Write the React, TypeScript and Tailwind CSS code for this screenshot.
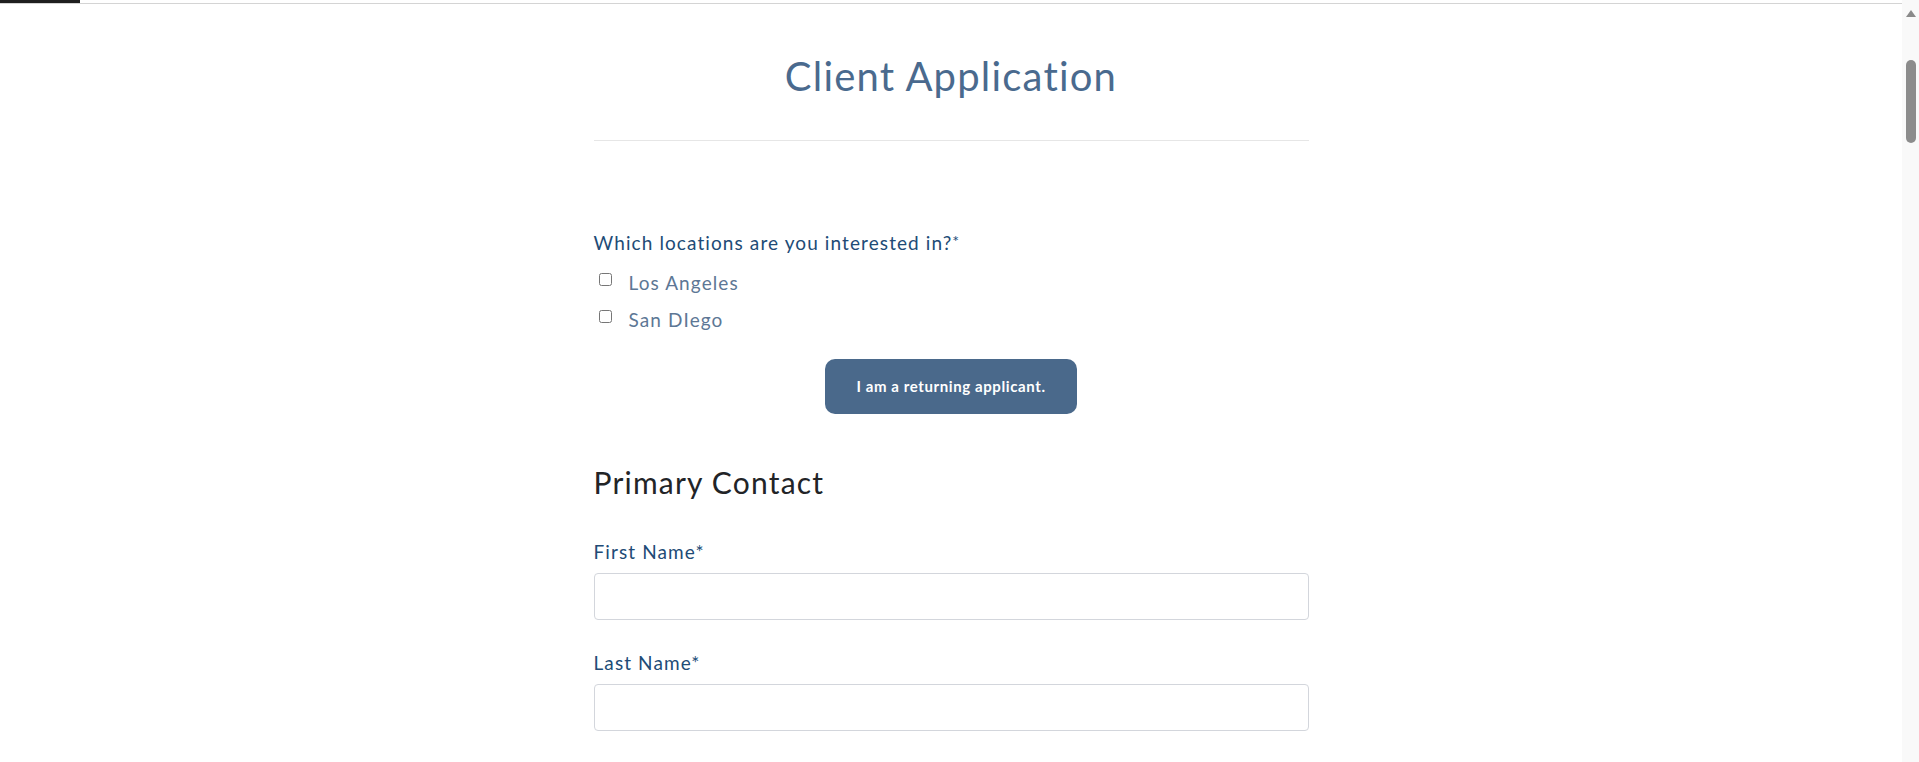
import React from 'react';

const locations = ['Los Angeles', 'San DIego'];

function Field({ label }: { label: string }) {
  return (
    <div className="flex flex-col">
      <label className="text-[19px] leading-[24px] tracking-[1.1px] text-[#214b76]">{label}</label>
      <input
        type="text"
        className="mt-[9px] h-[47px] w-full rounded-[4px] border border-[#d3d6dc] bg-white px-3 outline-none"
      />
    </div>
  );
}

export default function App() {
  return (
    <div className="flex h-[762px] overflow-hidden bg-white font-['Lato',sans-serif]">
      <div className="flex flex-1 flex-col">
        {/* browser chrome strip */}
        <div className="flex h-[3px]">
          <div className="w-[80px] bg-[#1f1f1f]" />
        </div>
        <div className="h-px bg-[#d4d4d4]" />

        <main className="mx-auto w-[715px]">
          <header className="mt-[52px] border-b border-[#e6e6e6] pb-[44px] text-center">
            <h1 className="text-[40px] leading-[40px] tracking-[1.2px] text-[#4a6a8e]">Client Application</h1>
          </header>

          <section className="mt-[90px]">
            <p className="text-[19px] leading-[24px] tracking-[1.1px] text-[#214b76]">
              Which locations are you interested in?<span className="align-top text-[16px] leading-[20px]">*</span>
            </p>
            <div className="mt-[9px] flex flex-col">
              {locations.map((loc) => (
                <label key={loc} className="flex h-[37px] items-center">
                  <input type="checkbox" className="m-0 mb-[6px] ml-[5px] h-[13px] w-[13px]" />
                  <span className="ml-[17px] text-[19px] leading-[28px] tracking-[1.1px] text-[#5d7795]">
                    {loc}
                  </span>
                </label>
              ))}
            </div>
            <div className="mt-[21px] flex justify-center">
              <button className="h-[55px] w-[252px] rounded-[10px] bg-[#4a698b] text-[15px] font-bold tracking-[0.6px] text-white">
                I am a returning applicant.
              </button>
            </div>
          </section>

          <h2 className="mt-[50px] text-[30px] leading-[36px] tracking-[1.2px] text-[#222427]">Primary Contact</h2>

          <div className="mt-[40px] flex flex-col gap-[31px]">
            <Field label="First Name*" />
            <Field label="Last Name*" />
          </div>
        </main>
      </div>

      {/* scrollbar */}
      <div className="flex w-[17px] flex-col items-center bg-[#f9f9f9] pt-[9px]">
        <svg width="12" height="9" viewBox="0 0 12 9">
          <path d="M6 1 L11 8 L1 8 Z" fill="#8a8a8a" />
        </svg>
        <div className="mt-[42px] h-[83px] w-[10px] rounded-full bg-[#8c8c8c]" />
      </div>
    </div>
  );
}
